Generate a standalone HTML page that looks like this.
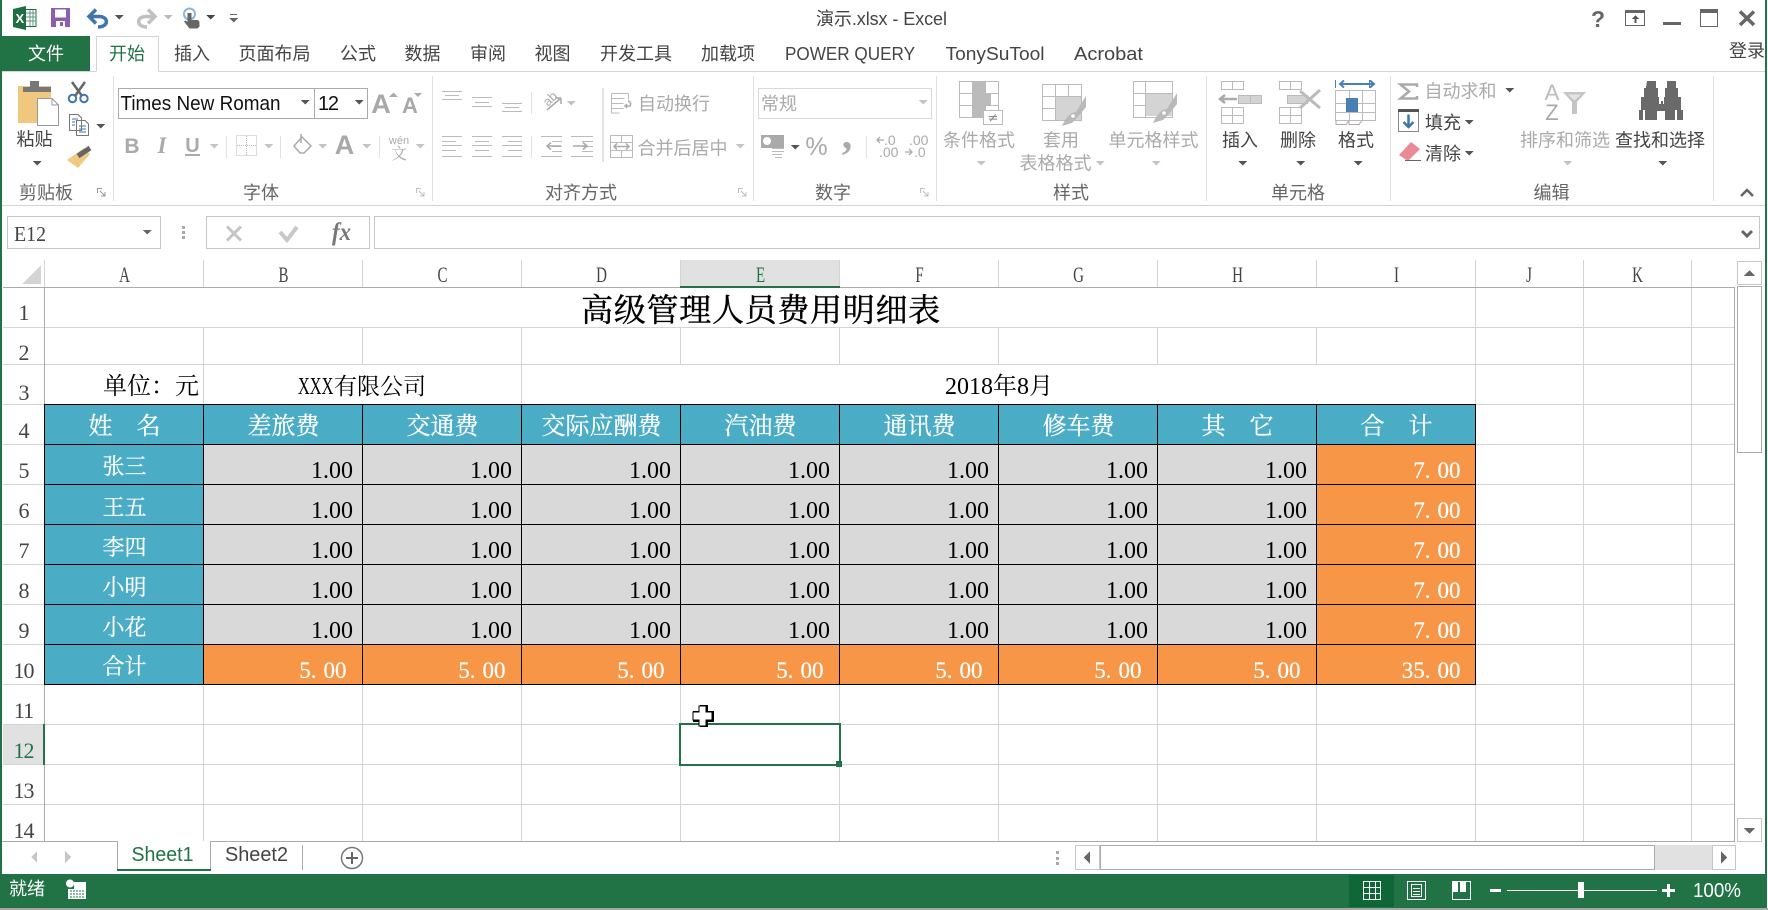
<!DOCTYPE html>
<html lang="zh">
<head>
<meta charset="utf-8">
<title>演示.xlsx - Excel</title>
<style>
html,body{margin:0;padding:0;background:#fff;width:1768px;height:910px;overflow:hidden}
svg{display:block}
.u{font-family:"Liberation Sans","Noto Sans CJK SC",sans-serif;font-size:18px}
.s{font-family:"Liberation Serif","Noto Serif CJK SC",serif}
.m{text-anchor:middle}
.e{text-anchor:end}
.g{fill:#aaa}
.d{fill:#444}
.l{fill:#666}
</style>
</head>
<body>
<svg width="1768" height="910" viewBox="0 0 1768 910" xmlns="http://www.w3.org/2000/svg" shape-rendering="crispEdges">
<defs><path id="t" d="M-4.500-2h9l-4.500 4.500z"/></defs>
<rect width="1768" height="910" fill="#fff"/>

<!-- frame -->
<rect x="0" y="0" width="2" height="908" fill="#217346"/>
<rect x="1765" y="0" width="2" height="908" fill="#217346"/>

<!-- title bar -->
<g shape-rendering="auto">
<polygon points="13,9 26,6 26,30 13,27" fill="#1f6e43"/>
<path d="M26 9.500h10v17H26" fill="#fff" stroke="#1f6e43"/>
<path d="M26 13h10M26 17h10M26 21h10M30 10v16M33 10v16" stroke="#5d9a78" fill="none"/>
<text x="15.500" y="23" font-family="Liberation Sans" font-size="13" font-weight="bold" fill="#fff">X</text>
<path d="M51 8h19v19H51z" fill="#8b5fae"/>
<rect x="55" y="9.500" width="11" height="8" fill="#fff"/>
<rect x="56" y="21" width="9" height="6" fill="#fff"/>
<rect x="60" y="22" width="3" height="4" fill="#8b5fae"/>
<path d="M90 16.500H99C109 16.500 109 27 98 27" fill="none" stroke="#3f76ad" stroke-width="3.500"/>
<path d="M96 9.500L89 16.500 96 23.500" fill="none" stroke="#3f76ad" stroke-width="3.500"/>
<path d="M155 16.500H146C136 16.500 136 27 147 27" fill="none" stroke="#c0c0c0" stroke-width="3.500"/>
<path d="M148 9.500L155 16.500 148 23.500" fill="none" stroke="#c0c0c0" stroke-width="3.500"/>
<circle cx="189.500" cy="14" r="5.500" fill="none" stroke="#8ab5dd" stroke-width="2"/>
<path d="M187.500 13h4v7h6.500l1.500 2v4.500l-2 2h-8l-5.500-7 1.500-1 2 1.500z" fill="#666"/>
</g>
<use href="#t" x="119" y="17" fill="#555"/>
<use href="#t" x="168" y="17" fill="#bbb"/>
<use href="#t" x="210.500" y="17" fill="#444"/>
<rect x="230" y="14" width="7" height="1" fill="#666"/>
<use href="#t" x="233.500" y="20" fill="#666"/>
<text class="u m" x="881.500" y="25" fill="#444" textLength="131">演示.xlsx - Excel</text>
<text x="1598" y="27" class="m" font-family="Liberation Sans" font-size="23" font-weight="bold" fill="#666">?</text>
<rect x="1625.500" y="10.500" width="19" height="15" fill="none" stroke="#666"/>
<rect x="1626" y="11" width="18" height="2" fill="#666"/>
<path d="M1635.500 15l-3.500 4h2.500v4h2v-4h2.500z" fill="#555"/>
<rect x="1663" y="22" width="18" height="3" fill="#666"/>
<rect x="1700.500" y="9.500" width="17" height="17" fill="none" stroke="#666"/>
<rect x="1701" y="10" width="16" height="3" fill="#666"/>
<path d="M1740 11.500L1754 25M1754 11.500L1740 25" stroke="#666" stroke-width="3.500" shape-rendering="auto"/>

<!-- tabs -->
<rect x="2" y="36" width="88" height="36" fill="#217346"/>
<rect x="2" y="71" width="1763" height="1" fill="#d4d4d4"/>
<rect x="96" y="36" width="63" height="36" fill="#fff"/>
<path d="M96.500 71.500V36.500H158.500V71.500" fill="none" stroke="#d4d4d4"/>
<rect x="97" y="70" width="61" height="3" fill="#fff"/>
<g class="u" shape-rendering="auto">
<text class="u m" x="46" y="60" fill="#fff">文件</text>
<text class="u m" x="127" y="60" fill="#217346">开始</text>
<g class="d">
<text class="u m" x="192" y="60">插入</text>
<text class="u m" x="274.500" y="60">页面布局</text>
<text class="u m" x="358" y="60">公式</text>
<text class="u m" x="422.500" y="60">数据</text>
<text class="u m" x="488" y="60">审阅</text>
<text class="u m" x="552.500" y="60">视图</text>
<text class="u m" x="636" y="60">开发工具</text>
<text class="u m" x="728" y="60">加载项</text>
<text class="u m" x="850" y="60" textLength="130" lengthAdjust="spacingAndGlyphs">POWER QUERY</text>
<text class="u m" x="995" y="60" textLength="99" lengthAdjust="spacingAndGlyphs">TonySuTool</text>
<text class="u m" x="1108.500" y="60" textLength="69" lengthAdjust="spacingAndGlyphs">Acrobat</text>
<text class="u m" x="1747" y="57">登录</text>
</g>
</g>

<!-- ribbon frame -->
<rect x="2" y="205" width="1763" height="1" fill="#d4d4d4"/>
<g fill="#e1e1e1">
<rect x="113" y="76" width="1" height="125"/>
<rect x="432" y="76" width="1" height="125"/>
<rect x="753" y="76" width="1" height="125"/>
<rect x="936" y="76" width="1" height="125"/>
<rect x="1206" y="76" width="1" height="125"/>
<rect x="1390" y="76" width="1" height="125"/>
<rect x="1713" y="76" width="1" height="125"/>
<rect x="226" y="136" width="1" height="22"/>
<rect x="280" y="136" width="1" height="22"/>
<rect x="379" y="136" width="1" height="22"/>
<rect x="531" y="92" width="1" height="22"/>
<rect x="531" y="136" width="1" height="22"/>
<rect x="602" y="88" width="2" height="74"/>
<rect x="866" y="136" width="1" height="22"/>
</g>
<g shape-rendering="auto" class="l">
<text class="u m" x="46" y="199">剪贴板</text>
<text class="u m" x="261" y="199">字体</text>
<text class="u m" x="581" y="199">对齐方式</text>
<text class="u m" x="833" y="199">数字</text>
<text class="u m" x="1071" y="199">样式</text>
<text class="u m" x="1298" y="199">单元格</text>
<text class="u m" x="1551.500" y="199">编辑</text>
</g>
<!-- dialog launchers -->
<g fill="none" stroke="#999">
<path d="M97.500 193V188.500H102M100 191l5 5M105 192v4h-4"/>
<path d="M416.500 193V188.500H421M419 191l5 5M424 192v4h-4" stroke="#c0c0c0"/>
<path d="M738.500 193V188.500H743M741 191l5 5M746 192v4h-4" stroke="#c0c0c0"/>
<path d="M920.500 193V188.500H925M923 191l5 5M928 192v4h-4" stroke="#c0c0c0"/>
</g>
<path d="M1741 196l6-6 6 6" fill="none" stroke="#666" stroke-width="2.500" shape-rendering="auto"/>

<!-- clipboard group -->
<rect x="18" y="86" width="33" height="37" fill="#efc77e"/>
<rect x="23" y="87" width="28" height="5" fill="#777"/>
<rect x="30" y="81" width="9" height="7" fill="#777"/>
<path d="M37.500 98.500H52L58.500 105V125.500H37.500z" fill="#fff" stroke="#999"/>
<path d="M52 98.500V105H58.500" fill="none" stroke="#999"/>
<text class="u m d" x="34.500" y="145.500" shape-rendering="auto">粘贴</text>
<use href="#t" x="37" y="163" fill="#555"/>
<g shape-rendering="auto" fill="none">
<path d="M72 82L82 96M85 82L75 96" stroke="#666" stroke-width="2.500"/>
<circle cx="72.500" cy="98.500" r="3.700" stroke="#3f76ad" stroke-width="2"/>
<circle cx="84" cy="98.500" r="3.700" stroke="#3f76ad" stroke-width="2"/>
<path d="M67 160L84 148 90 154 78 168z" fill="#f0c87f" stroke="none"/>
<path d="M78 156L90 148" stroke="#666" stroke-width="5"/>
</g>
<path d="M69.500 114.500H78L81.500 118V130.500H69.500zM76.500 120.500H85L88.500 124V135.500H76.500z" fill="#fff" stroke="#777"/>
<path d="M72 119h6M72 122h3M72 125h3M79 126h7M79 129h7M79 132h7" stroke="#3f76ad" fill="none"/>
<use href="#t" x="100.500" y="126" fill="#555"/>

<!-- font group -->
<rect x="118.500" y="88.500" width="249" height="30" fill="#fff" stroke="#ababab"/>
<rect x="314" y="89" width="1" height="29" fill="#ababab"/>
<text class="u" x="120.500" y="110" style="font-size:20px" fill="#111" textLength="160" lengthAdjust="spacingAndGlyphs" shape-rendering="auto">Times New Roman</text>
<text class="u" x="318" y="110" style="font-size:20px" fill="#111" textLength="21" shape-rendering="auto">12</text>
<use href="#t" x="305" y="102" fill="#555"/>
<use href="#t" x="359" y="102" fill="#555"/>
<g shape-rendering="auto">
<text x="381" y="113" class="m" font-family="Liberation Sans" font-size="27" font-weight="bold" fill="#a8a8a8">A</text>
<path d="M389 97l4.500-4.500 4.500 4.500z" fill="#aaa"/>
<text x="410" y="113" class="m" font-family="Liberation Sans" font-size="22" font-weight="bold" fill="#a8a8a8">A</text>
<path d="M414 93h8l-4 4z" fill="#aaa"/>
<text x="132" y="153" class="m" font-family="Liberation Sans" font-size="21" font-weight="bold" fill="#aaa">B</text>
<text x="162" y="153" class="m" font-family="Liberation Serif" font-size="23" font-style="italic" font-weight="bold" fill="#aaa">I</text>
<text x="192.500" y="152" class="m" font-family="Liberation Sans" font-size="20" font-weight="bold" fill="#aaa">U</text>
<text x="344.500" y="154" class="m" font-family="Liberation Sans" font-size="27" font-weight="bold" fill="#a8a8a8">A</text>
<text x="399" y="144" class="m" font-family="Liberation Sans" font-size="11" fill="#aaa">wén</text>
<text x="399" y="159" class="m" font-family="Noto Serif CJK SC,serif" font-size="16" fill="#aaa">文</text>
<path d="M294 146l8-9 9 9-7 7h-4zM301 134v9" fill="none" stroke="#aaa" stroke-width="1.500"/>
</g>
<rect x="185" y="154" width="15" height="2" fill="#aaa"/>
<use href="#t" x="214" y="146" fill="#c4c4c4"/>
<use href="#t" x="268.500" y="146" fill="#c4c4c4"/>
<use href="#t" x="322.500" y="146" fill="#c4c4c4"/>
<use href="#t" x="366.500" y="146" fill="#c4c4c4"/>
<use href="#t" x="420" y="146" fill="#c4c4c4"/>
<path d="M236.500 135.500h20v20h-20zM246.500 136v19M237 145.500h19" fill="none" stroke="#bbb" stroke-dasharray="1 1"/>

<!-- alignment group -->
<g fill="none" stroke="#bbb">
<path d="M442 91.500h20M445 95.500h14M442 99.500h20"/>
<path d="M472 97.500h20M475 102.500h14M472 106.500h20"/>
<path d="M502 103.500h20M505 107.500h14M502 111.500h20"/>
<path d="M442 136.500h20M442 141.500h14M442 145.500h20M442 150.500h14M442 156.500h20"/>
<path d="M472 136.500h20M475 141.500h14M472 145.500h20M475 150.500h14M472 156.500h20"/>
<path d="M502 136.500h20M508 141.500h14M502 145.500h20M508 150.500h14M502 156.500h20"/>
<path d="M541 136.500h21M552 141.500h10M552 146.500h10M552 151.500h10M541 156.500h21"/>
<path d="M571 136.500h22M571 156.500h22M582 141.500h11M582 146.500h11M582 151.500h11"/>
<path d="M611.500 93.500h17M611.500 98.500h13M611.500 103.500h12M611.500 108.500h12M611.500 93.500v19.500h8M628.500 93.500v6"/>
<path d="M610.500 135.500h22v22h-22zM611 142.500h21M611 150.500h21M621.500 136v6M621.500 151v6"/>
</g>
<g fill="none" stroke="#aaa" stroke-width="1.500" shape-rendering="auto">
<path d="M547 146h14M551 142.500L547 146 551 149.500"/>
<path d="M573 146h14M583 142.500L587 146 583 149.500"/>
<path d="M614 146.500h15M617 143.500l-3 3 3 3M626 143.500l3 3-3 3"/>
<path d="M547 110L561 98M561 98v6M561 98h-6"/>
<path d="M628 101q4 1 2 5h-5M627 104l-2 2 2 2"/>
</g>
<text x="548" y="107" font-family="Liberation Sans" font-size="13" fill="#aaa" transform="rotate(-45 548 107)" shape-rendering="auto">ab</text>
<use href="#t" x="571" y="103" fill="#c4c4c4"/>
<use href="#t" x="740" y="146" fill="#c4c4c4"/>
<g shape-rendering="auto" class="g">
<text class="u" x="638" y="110">自动换行</text>
<text class="u" x="637.500" y="154.500">合并后居中</text>
</g>

<!-- number group -->
<rect x="758.500" y="88.500" width="173" height="30" fill="#fff" stroke="#d9d9d9"/>
<text class="u g" x="761" y="110" shape-rendering="auto">常规</text>
<use href="#t" x="923" y="102" fill="#c4c4c4"/>
<rect x="761" y="135" width="23" height="13" fill="#aaa"/>
<circle cx="767" cy="141" r="4" fill="#fff" shape-rendering="auto"/>
<path d="M772 148.500h12M772 151.500h12M772 154.500h10M775 157.500h7" stroke="#bbb" fill="none"/>
<use href="#t" x="795" y="147" fill="#555"/>
<g shape-rendering="auto">
<text x="816.500" y="155" class="m" font-family="Liberation Sans" font-size="25" fill="#aaa">%</text>
<text x="847" y="148" class="m" font-family="Liberation Serif" font-size="42" font-weight="bold" fill="#aaa">,</text>
<text x="884" y="145" font-family="Liberation Sans" font-size="14" fill="#aaa">.0</text>
<text x="909" y="145" font-family="Liberation Sans" font-size="14" fill="#aaa">.00</text>
<text x="879" y="157" font-family="Liberation Sans" font-size="14" fill="#aaa">.00</text>
<text x="914" y="157" font-family="Liberation Sans" font-size="14" fill="#aaa">.0</text>
<path d="M884 140h-7M880 137l-3 3 3 3M905 152h7M909 149l3 3-3 3" stroke="#aaa" fill="none" stroke-width="1.300"/>
</g>

<!-- styles group -->
<g fill="none" stroke="#bbb">
<path d="M959.500 81.500h39v36h-39zM972.500 82v35M985.500 82v35M960 93.500h38M960 105.500h38"/>
<rect x="973" y="82" width="12" height="35" fill="#bbb" stroke="none"/>
<rect x="985" y="94" width="6" height="11" fill="#bbb" stroke="none"/>
<rect x="983.500" y="110.500" width="19" height="14" fill="#fff"/>
<path d="M1042.500 84.500h39v36h-39zM1042.500 96.500h39M1042.500 108.500h39M1055.500 85v35M1068.500 85v35"/>
<rect x="1056" y="97" width="25" height="23" fill="#d4d4d4" stroke="none"/>
<path d="M1133.500 81.500h39v36h-39zM1134 93.500h38M1134 105.500h38M1145.500 82v35"/>
<rect x="1146" y="94" width="26" height="22" fill="#d4d4d4" stroke="none"/>
</g>
<g shape-rendering="auto">
<text x="993" y="122" class="m" font-family="DejaVu Sans" font-size="13" fill="#888">≠</text>
<path d="M1086 107L1077 118 1072 123 1062 126C1065 120 1067 116 1072 113L1076 112 1086 96z" fill="#b9b9b9"/>
<path d="M1177 104L1168 115 1163 120 1153 123C1156 117 1158 113 1163 110L1167 109 1177 93z" fill="#b9b9b9"/>
<circle cx="1073" cy="116" r="1.800" fill="#fff"/><circle cx="1164" cy="113" r="1.800" fill="#fff"/>
</g>
<g shape-rendering="auto" class="g">
<text class="u m" x="979" y="146.500">条件格式</text>
<text class="u m" x="1061" y="146.500">套用</text>
<text class="u m" x="1055.500" y="169.500">表格格式</text>
<text class="u m" x="1153.500" y="146.500">单元格样式</text>
</g>
<use href="#t" x="981" y="163" fill="#c4c4c4"/>
<use href="#t" x="1100" y="163" fill="#c4c4c4"/>
<use href="#t" x="1156" y="163" fill="#c4c4c4"/>

<!-- cells group -->
<g fill="none" stroke="#bbb">
<path d="M1221.500 81.500h22v8h-22zM1232.500 82v7M1221.500 107.500h22v16h-22zM1232.500 108v15M1222 115.500h21"/>
<path d="M1238.500 95.500h23v8h-23zM1250.500 96v7" fill="#d4d4d4"/>
<path d="M1279.500 81.500h22v8h-22zM1290.500 82v7M1279.500 107.500h22v16h-22zM1290.500 108v15M1280 115.500h21"/>
<path d="M1287.500 95.500h20v8h-20z" fill="#d4d4d4"/>
<path d="M1335.500 90.500h40v30h-40zM1349.500 91v29M1362.500 91v29M1336 103.500h39M1336 112.500h39"/>
<path d="M1336 120.500v4h10l3-4M1349 120.500v4h10l3-4" stroke="#aaa"/>
</g>
<rect x="1346" y="98" width="12" height="14" fill="#4a7fb5"/>
<g shape-rendering="auto" fill="none">
<path d="M1237 99h-16M1225 95l-5 4 5 4" stroke="#aaa" stroke-width="2.500"/>
<path d="M1300 91L1320 108M1320 90L1300 108" stroke="#bbb" stroke-width="3"/>
<path d="M1340 84h34M1344 80.500l-4 3.500 4 3.500M1370 80.500l4 3.500-4 3.500" stroke="#4a7fb5" stroke-width="2"/>
</g>
<rect x="1335" y="80" width="1" height="8" fill="#4a7fb5"/><rect x="1369" y="80" width="1" height="8" fill="#4a7fb5"/>
<g shape-rendering="auto" class="d">
<text class="u m" x="1240" y="146.500">插入</text>
<text class="u m" x="1298" y="146.500">删除</text>
<text class="u m" x="1356" y="146.500">格式</text>
</g>
<use href="#t" x="1242.500" y="163" fill="#555"/>
<use href="#t" x="1300.500" y="163" fill="#555"/>
<use href="#t" x="1358" y="163" fill="#555"/>

<!-- editing group -->
<path d="M1417 87V84.500H1400.500L1409 91.500 1400.500 98.500H1417V96" fill="none" stroke="#aaa" stroke-width="2.500" shape-rendering="auto"/>
<text class="u g" x="1424.500" y="97.500" shape-rendering="auto">自动求和</text>
<use href="#t" x="1509.500" y="90" fill="#555"/>
<rect x="1398.500" y="109.500" width="20" height="22" fill="#fff" stroke="#888"/>
<rect x="1398" y="109" width="21" height="3" fill="#555"/>
<path d="M1408.500 114.500v12M1403.500 122l5 5 5-5" fill="none" stroke="#3f76ad" stroke-width="2.500" shape-rendering="auto"/>
<path d="M1399 155L1411 142 1420 149 1408 161z" fill="#e98a97" shape-rendering="auto"/>
<rect x="1405" y="160" width="16" height="1" fill="#666"/>
<g shape-rendering="auto" class="d">
<text class="u" x="1425" y="129">填充</text>
<text class="u" x="1425" y="160">清除</text>
<text class="u m l" x="1565" y="146.500" style="fill:#aaa">排序和筛选</text>
<text class="u m" x="1660" y="146.500">查找和选择</text>
</g>
<use href="#t" x="1469" y="122" fill="#555"/>
<use href="#t" x="1469" y="153" fill="#555"/>
<g shape-rendering="auto">
<text x="1552" y="100" class="m" font-family="Liberation Sans" font-size="22" fill="#bbb">A</text>
<text x="1552" y="120" class="m" font-family="Liberation Sans" font-size="22" fill="#aaa">Z</text>
<path d="M1563 92h23l-9 10v12h-5V102z" fill="#c4c4c4"/>
<path d="M1568 94.500h13l-6.500 6z" fill="#e4e4e4"/>
</g>
<use href="#t" x="1567.500" y="163" fill="#c4c4c4"/>
<!-- binoculars -->
<path d="M1647 81h9v7h2v9h1v7h2v-3h2v3h1v-7h1v-9h2v-7h9v7h2v9h3v13h2v10h-18v-9h-8v9h-18v-10h2v-13h3v-9h2z" fill="#6a6a6a"/>
<rect x="1643" y="110" width="2" height="10" fill="#fff"/><rect x="1675" y="110" width="2" height="10" fill="#fff"/>
<use href="#t" x="1662.500" y="163" fill="#555"/>

<!-- formula bar -->
<rect x="7.500" y="216.500" width="153" height="32" fill="#fff" stroke="#c6c6c6"/>
<text class="s" x="14" y="241" font-size="21" fill="#444" textLength="32" lengthAdjust="spacingAndGlyphs" shape-rendering="auto">E12</text>
<use href="#t" x="147" y="232" fill="#666"/>
<rect x="182" y="226" width="3" height="3" fill="#aaa"/><rect x="182" y="231" width="3" height="3" fill="#aaa"/><rect x="182" y="236" width="3" height="3" fill="#aaa"/>
<rect x="206.500" y="216.500" width="163" height="32" fill="#fff" stroke="#c6c6c6"/>
<rect x="374.500" y="216.500" width="1385" height="32" fill="#fff" stroke="#c6c6c6"/>
<g shape-rendering="auto">
<path d="M227 226.500L241 240.500M241 226.500L227 240.500" stroke="#c4c4c4" stroke-width="3"/>
<path d="M280 232L287 240 297 227" fill="none" stroke="#c8c8c8" stroke-width="4"/>
<text x="332" y="240" font-family="Liberation Serif" font-size="25" font-style="italic" font-weight="bold" fill="#777" textLength="19" lengthAdjust="spacingAndGlyphs">fx</text>
<path d="M1742 231l5 5 5-5" fill="none" stroke="#666" stroke-width="3"/>
</g>

<!-- col headers -->
<rect x="680" y="260" width="160" height="27" fill="#e1e1e1"/>
<g fill="#d4d4d4">
<rect x="44" y="260" width="1" height="27"/><rect x="203" y="260" width="1" height="27"/><rect x="362" y="260" width="1" height="27"/><rect x="521" y="260" width="1" height="27"/><rect x="680" y="260" width="1" height="27"/><rect x="839" y="260" width="1" height="27"/><rect x="998" y="260" width="1" height="27"/><rect x="1157" y="260" width="1" height="27"/><rect x="1316" y="260" width="1" height="27"/><rect x="1475" y="260" width="1" height="27"/><rect x="1583" y="260" width="1" height="27"/><rect x="1691" y="260" width="1" height="27"/>
</g>
<polygon points="22,284 41,284 41,265" fill="#d4d4d4"/>
<g class="s l" font-size="22" text-anchor="middle" shape-rendering="auto" fill="#444">
<text transform="translate(124.500,282) scale(.68,1)" fill="#444">A</text>
<text transform="translate(283.500,282) scale(.68,1)" fill="#444">B</text>
<text transform="translate(442.500,282) scale(.68,1)" fill="#444">C</text>
<text transform="translate(601.500,282) scale(.68,1)" fill="#444">D</text>
<text transform="translate(760.500,282) scale(.68,1)" fill="#217346">E</text>
<text transform="translate(919.500,282) scale(.68,1)" fill="#444">F</text>
<text transform="translate(1078.500,282) scale(.68,1)" fill="#444">G</text>
<text transform="translate(1237.500,282) scale(.68,1)" fill="#444">H</text>
<text transform="translate(1396.500,282) scale(.68,1)" fill="#444">I</text>
<text transform="translate(1529,282) scale(.68,1)" fill="#444">J</text>
<text transform="translate(1637.500,282) scale(.68,1)" fill="#444">K</text>
</g>

<!-- grid lines -->
<g fill="#d4d4d4">
<rect x="3" y="327" width="1731" height="1"/><rect x="3" y="364" width="1731" height="1"/><rect x="3" y="404" width="1731" height="1"/><rect x="3" y="444" width="1731" height="1"/><rect x="3" y="484" width="1731" height="1"/><rect x="3" y="524" width="1731" height="1"/><rect x="3" y="564" width="1731" height="1"/><rect x="3" y="604" width="1731" height="1"/><rect x="3" y="644" width="1731" height="1"/><rect x="3" y="684" width="1731" height="1"/><rect x="3" y="724" width="1731" height="1"/><rect x="3" y="764" width="1731" height="1"/><rect x="3" y="804" width="1731" height="1"/>
<rect x="1583" y="288" width="1" height="553"/><rect x="1691" y="288" width="1" height="553"/><rect x="1475" y="288" width="1" height="553"/>
<rect x="203" y="328" width="1" height="76"/><rect x="362" y="328" width="1" height="36"/><rect x="521" y="328" width="1" height="76"/><rect x="680" y="328" width="1" height="36"/><rect x="839" y="328" width="1" height="36"/><rect x="998" y="328" width="1" height="36"/><rect x="1157" y="328" width="1" height="36"/><rect x="1316" y="328" width="1" height="36"/>
<rect x="203" y="685" width="1" height="156"/><rect x="362" y="685" width="1" height="156"/><rect x="521" y="685" width="1" height="156"/><rect x="680" y="685" width="1" height="156"/><rect x="839" y="685" width="1" height="156"/><rect x="998" y="685" width="1" height="156"/><rect x="1157" y="685" width="1" height="156"/><rect x="1316" y="685" width="1" height="156"/>
</g>
<rect x="3" y="287" width="1732" height="1" fill="#ababab"/>
<rect x="44" y="287" width="1" height="554" fill="#ababab"/>
<rect x="1734" y="287" width="1" height="554" fill="#ababab"/>
<rect x="2" y="841" width="1733" height="1" fill="#ababab"/>
<rect x="680" y="286" width="160" height="2" fill="#217346"/>
<rect x="3" y="725" width="41" height="39" fill="#e1e1e1"/>
<rect x="43" y="724" width="2" height="41" fill="#217346"/>

<!-- table fills -->
<rect x="45" y="405" width="1431" height="39" fill="#4bacc6"/>
<rect x="45" y="445" width="158" height="240" fill="#4bacc6"/>
<rect x="204" y="445" width="1112" height="199" fill="#d9d9d9"/>
<rect x="1317" y="445" width="159" height="199" fill="#f79646"/>
<rect x="204" y="645" width="1272" height="39" fill="#f79646"/>
<g fill="#000">
<rect x="44" y="404" width="1432" height="1"/><rect x="44" y="444" width="1432" height="1"/><rect x="44" y="484" width="1432" height="1"/><rect x="44" y="524" width="1432" height="1"/><rect x="44" y="564" width="1432" height="1"/><rect x="44" y="604" width="1432" height="1"/><rect x="44" y="644" width="1432" height="1"/><rect x="44" y="684" width="1432" height="1"/>
<rect x="44" y="404" width="1" height="281"/><rect x="203" y="404" width="1" height="281"/><rect x="362" y="404" width="1" height="281"/><rect x="521" y="404" width="1" height="281"/><rect x="680" y="404" width="1" height="281"/><rect x="839" y="404" width="1" height="281"/><rect x="998" y="404" width="1" height="281"/><rect x="1157" y="404" width="1" height="281"/><rect x="1316" y="404" width="1" height="281"/><rect x="1475" y="404" width="1" height="281"/>
</g>

<!-- row headers -->
<g class="s" font-size="22" text-anchor="middle" letter-spacing="-1" fill="#444" shape-rendering="auto">
<text x="23.500" y="320">1</text><text x="23.500" y="360">2</text><text x="23.500" y="400">3</text><text x="23.500" y="438">4</text><text x="23.500" y="478">5</text><text x="23.500" y="518">6</text><text x="23.500" y="558">7</text><text x="23.500" y="598">8</text><text x="23.500" y="638">9</text><text x="23.500" y="678">10</text><text x="23.500" y="718">11</text><text x="23.500" y="758" fill="#217346">12</text><text x="23.500" y="798">13</text><text x="23.500" y="838">14</text>
</g>

<!-- sheet text -->
<g class="s" shape-rendering="auto">
<text class="s m" x="761" y="321" font-size="32" letter-spacing=".7" fill="#000" stroke="#000" stroke-width=".4">高级管理人员费用明细表</text>
<g font-size="24" fill="#000">
<text class="s e" x="199" y="394">单位：元</text>
<text class="s" transform="translate(298,394) scale(.68,1)">XXX</text>
<text class="s" x="334" y="394" font-size="23">有限公司</text>
<text class="s m" x="999" y="394">2018年8月</text>
</g>
<g font-size="24" fill="#fff" stroke="#fff" stroke-width=".25" text-anchor="middle">
<text x="124.500" y="434">姓　名</text>
<text x="283.500" y="434">差旅费</text>
<text x="442.500" y="434">交通费</text>
<text x="601.500" y="434">交际应酬费</text>
<text x="760.500" y="434">汽油费</text>
<text x="919.500" y="434">通讯费</text>
<text x="1078.500" y="434">修车费</text>
<text x="1237.500" y="434">其　它</text>
<text x="1396.500" y="434">合　计</text>
</g>
<g font-size="22" fill="#fff" stroke="#fff" stroke-width=".25" text-anchor="middle">
<text x="124.500" y="474">张三</text>
<text x="124.500" y="515">王五</text>
<text x="124.500" y="555">李四</text>
<text x="124.500" y="595">小明</text>
<text x="124.500" y="635">小花</text>
<text x="124.500" y="674">合计</text>
</g>
<g font-size="24" fill="#000" text-anchor="end">
<text x="353" y="478">1.00</text><text x="512" y="478">1.00</text><text x="671" y="478">1.00</text><text x="830" y="478">1.00</text><text x="989" y="478">1.00</text><text x="1148" y="478">1.00</text><text x="1307" y="478">1.00</text>
<text x="353" y="518">1.00</text><text x="512" y="518">1.00</text><text x="671" y="518">1.00</text><text x="830" y="518">1.00</text><text x="989" y="518">1.00</text><text x="1148" y="518">1.00</text><text x="1307" y="518">1.00</text>
<text x="353" y="558">1.00</text><text x="512" y="558">1.00</text><text x="671" y="558">1.00</text><text x="830" y="558">1.00</text><text x="989" y="558">1.00</text><text x="1148" y="558">1.00</text><text x="1307" y="558">1.00</text>
<text x="353" y="598">1.00</text><text x="512" y="598">1.00</text><text x="671" y="598">1.00</text><text x="830" y="598">1.00</text><text x="989" y="598">1.00</text><text x="1148" y="598">1.00</text><text x="1307" y="598">1.00</text>
<text x="353" y="638">1.00</text><text x="512" y="638">1.00</text><text x="671" y="638">1.00</text><text x="830" y="638">1.00</text><text x="989" y="638">1.00</text><text x="1148" y="638">1.00</text><text x="1307" y="638">1.00</text>
</g>
<g font-size="23" fill="#fff" stroke="#fff" stroke-width=".2" text-anchor="end">
<text x="1460.500" y="478">7.<tspan dx="7">00</tspan></text><text x="1460.500" y="518">7.<tspan dx="7">00</tspan></text><text x="1460.500" y="558">7.<tspan dx="7">00</tspan></text><text x="1460.500" y="598">7.<tspan dx="7">00</tspan></text><text x="1460.500" y="638">7.<tspan dx="7">00</tspan></text>
<text x="346.500" y="678">5.<tspan dx="7">00</tspan></text><text x="505.500" y="678">5.<tspan dx="7">00</tspan></text><text x="664.500" y="678">5.<tspan dx="7">00</tspan></text><text x="823.500" y="678">5.<tspan dx="7">00</tspan></text><text x="982.500" y="678">5.<tspan dx="7">00</tspan></text><text x="1141.500" y="678">5.<tspan dx="7">00</tspan></text><text x="1300.500" y="678">5.<tspan dx="7">00</tspan></text><text x="1460.500" y="678">35.<tspan dx="7">00</tspan></text>
</g>
</g>

<!-- selection -->
<rect x="680" y="724" width="160" height="41" fill="none" stroke="#217346" stroke-width="2"/>
<rect x="836" y="761" width="6" height="6" fill="#217346"/>
<!-- cursor -->
<path d="M700 705h8v6h6v11h-6v5h-8v-5h-7v-11h7z" fill="#000"/>
<path d="M699 706h7v6h6v8h-6v6h-7v-6h-6v-8h6z" fill="#fff" stroke="#000"/>

<!-- sheet tabs -->
<rect x="118" y="841" width="92" height="3" fill="#fff"/>
<rect x="117" y="841" width="1" height="30" fill="#ababab"/>
<rect x="210" y="841" width="1" height="30" fill="#ababab"/>
<rect x="117" y="869" width="94" height="2" fill="#217346"/>
<rect x="302" y="845" width="1" height="25" fill="#ababab"/>
<path d="M37 851v12l-6-6z" fill="#c6c6c6"/>
<path d="M65 851v12l6-6z" fill="#c6c6c6"/>
<g shape-rendering="auto">
<text x="162.500" y="861" class="m" font-family="Liberation Sans" font-size="20" fill="#217346" textLength="62" lengthAdjust="spacingAndGlyphs">Sheet1</text>
<text x="256.500" y="861" class="m" font-family="Liberation Sans" font-size="20" fill="#444" textLength="63" lengthAdjust="spacingAndGlyphs">Sheet2</text>
<circle cx="352" cy="858" r="10.500" fill="#fff" stroke="#777" stroke-width="1.500"/>
<path d="M346 858h12M352 852v12" stroke="#666" stroke-width="2"/>
</g>

<!-- scrollbars -->
<rect x="1056" y="851" width="3" height="3" fill="#aaa"/><rect x="1056" y="857" width="3" height="3" fill="#aaa"/><rect x="1056" y="862" width="3" height="3" fill="#aaa"/>
<rect x="1100" y="845" width="612" height="25" fill="#e1e1e1"/>
<rect x="1075.500" y="845.500" width="24" height="24" fill="#fff" stroke="#c6c6c6"/>
<path d="M1090 851v13l-6-6.500z" fill="#666"/>
<rect x="1100.500" y="845.500" width="554" height="24" fill="#fff" stroke="#ababab"/>
<rect x="1712.500" y="845.500" width="23" height="24" fill="#fff" stroke="#c6c6c6"/>
<path d="M1721 851v13l6-6.500z" fill="#666"/>
<rect x="1737.500" y="261.500" width="24" height="23" fill="#fff" stroke="#c6c6c6"/>
<path d="M1744 276h11l-5.500-6z" fill="#666"/>
<rect x="1737.500" y="286.500" width="24" height="166" fill="#fff" stroke="#ababab"/>
<rect x="1737.500" y="818.500" width="24" height="23" fill="#fff" stroke="#c6c6c6"/>
<path d="M1744 828h11l-5.500 6z" fill="#666"/>

<!-- status bar -->
<rect x="2" y="874" width="1763" height="34" fill="#217346"/>
<rect x="0" y="908" width="1768" height="2" fill="#a6a6a6"/>
<text class="u" x="9" y="895" fill="#fff" shape-rendering="auto">就绪</text>
<circle cx="70" cy="883.500" r="4" fill="#fff" shape-rendering="auto"/>
<path d="M74 882h12v17H68v-10h6z" fill="#fff"/>
<path d="M70 891h14M70 894h14M70 897h14" stroke="#217346" stroke-dasharray="2 1" fill="none"/>
<rect x="1349" y="875" width="45" height="32" fill="#0f6637"/>
<path d="M1363.500 881.500h17v18h-17zM1369.500 882v17M1375.500 882v17M1364 887.500h16M1364 893.500h16" fill="none" stroke="#fff"/>
<path d="M1407.500 881.500h18v18h-18zM1411.500 884.500h10v12h-10zM1413 888.500h7M1413 891.500h7M1413 894.500h7" fill="none" stroke="#fff"/>
<path d="M1452.500 881.500h18v18h-18z" fill="none" stroke="#fff"/>
<rect x="1453" y="882" width="5" height="10" fill="#fff"/>
<rect x="1460" y="882" width="6" height="10" fill="#fff"/>
<rect x="1490" y="889" width="11" height="3" fill="#fff"/>
<rect x="1507" y="890" width="150" height="1" fill="#fff"/>
<rect x="1578" y="882" width="6" height="16" fill="#fff"/>
<rect x="1662" y="889" width="13" height="3" fill="#fff"/>
<rect x="1667" y="884" width="3" height="13" fill="#fff"/>
<text x="1693" y="897" font-family="Liberation Sans" font-size="20" fill="#fff" textLength="48" lengthAdjust="spacingAndGlyphs" shape-rendering="auto">100%</text>
</svg>
</body>
</html>
